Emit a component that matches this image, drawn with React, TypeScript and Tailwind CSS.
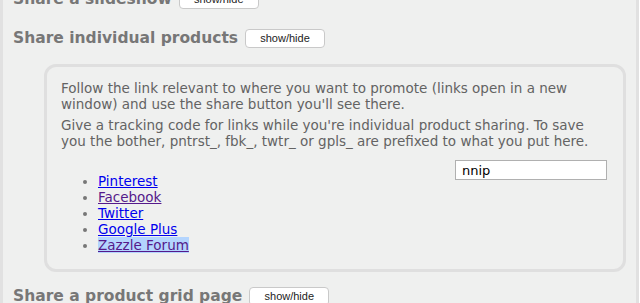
const links = [
  { label: "Pinterest", visited: false },
  { label: "Facebook", visited: true },
  { label: "Twitter", visited: false },
  { label: "Google Plus", visited: false },
  { label: "Zazzle Forum", visited: true, selected: true },
];

function ToggleButton() {
  return (
    <button className="h-[19px] w-[80px] rounded-[4px] border border-[#c9c9c9] bg-white text-[11px] leading-none text-[#222] [font-family:'Liberation_Sans',Arial,sans-serif]">
      show/hide
    </button>
  );
}

function SectionHeading({ title }: { title: string }) {
  return (
    <div className="flex items-center gap-[7px]">
      <h2 className="text-[15.5px] font-bold leading-[19px] text-[#777]">{title}</h2>
      <ToggleButton />
    </div>
  );
}

export default function App() {
  return (
    <div className="h-[303px] w-[639px] overflow-hidden border-x-[3px] border-[#e1e1e1] bg-[#eff0ef] pl-[10px] [font-family:'DejaVu_Sans',Verdana,sans-serif]">
      <div className="-mt-[10px]">
        <SectionHeading title="Share a slideshow" />
      </div>

      <div className="mt-[20px]">
        <SectionHeading title="Share individual products" />
        <div className="ml-[31px] mr-[10px] mt-[16px] rounded-[12px] border-[3px] border-[#dfdfdf] px-[14px] pb-[16px] pt-[13px] text-[13.5px] leading-[16px] text-[#636363]">
          <p>
            Follow the link relevant to where you want to promote (links open in a new
            <br />
            window) and use the share button you'll see there.
          </p>
          <p className="mt-[5px]">
            Give a tracking code for links while you're individual product sharing. To save
            <br />
            you the bother, pntrst_, fbk_, twtr_ or gpls_ are prefixed to what you put here.
          </p>
          <div className="mt-[11px] flex justify-end pr-[2px]">
            <input
              defaultValue="nnip"
              className="h-[20px] w-[152px] border border-[#b0b0b0] bg-white px-[6px] text-[13px] text-black outline-none"
            />
          </div>
          <ul className="-mt-[7px] list-disc pl-[37px] marker:text-[#777]">
            {links.map((l) => (
              <li key={l.label}>
                <a
                  href="#"
                  className={`underline ${l.visited ? "text-[#551a8b]" : "text-[#0000ee]"} ${
                    l.selected ? "bg-[#b4d5fe]" : ""
                  }`}
                >
                  {l.label}
                </a>
              </li>
            ))}
          </ul>
        </div>
      </div>

      <div className="mt-[15px]">
        <SectionHeading title="Share a product grid page" />
      </div>
    </div>
  );
}
